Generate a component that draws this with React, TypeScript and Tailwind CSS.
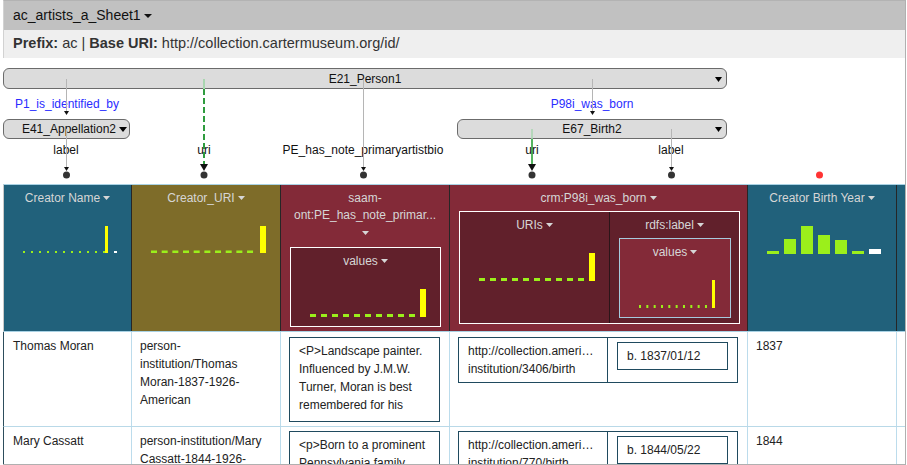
import React from 'react';

type Bar = { x: number; y: number; w: number; h: number; c: string };

const GREEN = '#9bef1b';
const YELLOW = '#ffff00';

const Caret = ({ w = 7, h = 4 }: { w?: number; h?: number }) => (
  <svg width={w} height={h} viewBox={`0 0 ${w} ${h}`} className="shrink-0">
    <path d={`M0 0H${w}L${w / 2} ${h}Z`} fill="currentColor" />
  </svg>
);

const Title = ({ children }: { children: React.ReactNode }) => (
  <div className="flex items-center gap-[3px] leading-[16px] text-[#d6d6d6] whitespace-nowrap">
    {children}
    <Caret />
  </div>
);

const Chart = ({ width, height, bars }: { width: number; height: number; bars: Bar[] }) => (
  <svg width={width} height={height} className="block shrink-0">
    {bars.map((b, i) => (
      <rect key={i} x={b.x} y={b.y} width={b.w} height={b.h} fill={b.c} />
    ))}
  </svg>
);

const run = (n: number, x0: number, step: number, w: number, y: number, h: number): Bar[] =>
  Array.from({ length: n }, (_, i) => ({ x: x0 + step * i, y, w, h, c: GREEN }));

const nameBars = [...run(11, 19, 8, 2, 31, 2), { x: 101, y: 6, w: 3, h: 27, c: YELLOW }, { x: 110, y: 31, w: 3, h: 2, c: '#fff' }];
const uriBars = [...run(10, 19, 10.67, 6, 30.5, 2.5), { x: 128, y: 6, w: 6, h: 27, c: YELLOW }];
const wideBars = [...run(10, 19, 11, 6, 45, 3), { x: 129, y: 20, w: 6, h: 28, c: YELLOW }];
const labelBars = [...run(10, 19, 7.33, 2, 45, 3), { x: 92, y: 20, w: 3, h: 28, c: YELLOW }];
const yearBars: Bar[] = [
  { x: 19, y: 31, w: 12, h: 3, c: GREEN },
  { x: 36, y: 19, w: 12, h: 15, c: GREEN },
  { x: 53, y: 6, w: 12, h: 28, c: GREEN },
  { x: 70, y: 15, w: 12, h: 19, c: GREEN },
  { x: 87, y: 20, w: 12, h: 14, c: GREEN },
  { x: 104, y: 31, w: 12, h: 3, c: GREEN },
  { x: 121, y: 29, w: 12, h: 5, c: '#fff' },
];

// graph: node labels centred on their link lines (page x)
const links = [
  { x: 66, text: 'label' },
  { x: 204, text: 'uri' },
  { x: 363, text: 'PE_has_note_primaryartistbio' },
  { x: 532, text: 'uri' },
  { x: 671, text: 'label' },
];

const SmallArrow = ({ x, tip }: { x: number; tip: number }) => (
  <path d={`M${x - 2.5} ${tip - 4}H${x + 2.5}L${x} ${tip}Z`} fill="#111" />
);
const BigArrow = ({ x, tip }: { x: number; tip: number }) => (
  <path d={`M${x - 4} ${tip - 7}H${x + 4}L${x} ${tip}Z`} fill="#111" />
);

const Graph = () => (
  <div className="relative h-[126px] shrink-0 text-[12px] text-[#111]">
    {/* E21_Person1 */}
    <div className="absolute left-0 top-[10px] w-[724px] h-[21px] rounded-[6px] border border-[#6b6b6b] bg-[#dcdcdc] flex items-center justify-center">
      E21_Person1
      <span className="absolute right-[4px] top-[8px] text-black"><Caret w={7} h={5} /></span>
    </div>
    {/* E41_Appellation2 */}
    <div className="absolute left-0 top-[61px] w-[127px] h-[20px] rounded-[6px] border border-[#6b6b6b] bg-[#dcdcdc] flex items-center justify-end gap-[3px] pr-[2px]">
      E41_Appellation2
      <span className="text-black"><Caret w={8} h={5} /></span>
    </div>
    {/* E67_Birth2 */}
    <div className="absolute left-[454px] top-[61px] w-[270px] h-[20px] rounded-[6px] border border-[#6b6b6b] bg-[#dcdcdc] flex items-center justify-center">
      E67_Birth2
      <span className="absolute right-[4px] top-[7px] text-black"><Caret w={7} h={5} /></span>
    </div>

    <div className="absolute left-[-36px] top-[38px] w-[200px] leading-[16px] text-center text-[#2a2cff]">P1_is_identified_by</div>
    <div className="absolute left-[489px] top-[38px] w-[200px] leading-[16px] text-center text-[#2a2cff]">P98i_was_born</div>

    {links.map((l, i) => (
      <div key={i} className="absolute top-[84px] w-[200px] leading-[16px] text-center" style={{ left: l.x - 3 - 100 }}>
        {l.text}
      </div>
    ))}

    <svg width="902" height="126" className="absolute left-0 top-0 pointer-events-none">
      <g transform="translate(-3 -58)">
        <path d="M66.5 79V112M66.5 129V168M363.5 79V168M592.5 79V112M671.5 129V168" stroke="#b5b5b5" strokeWidth="1" fill="none" />
        <path d="M204 79V89" stroke="#a9d6b0" strokeWidth="2" />
        <path d="M204 89V164" stroke="#2f9c3f" strokeWidth="2" strokeDasharray="6 3" />
        <path d="M532 129V139" stroke="#a9d6b0" strokeWidth="1.5" />
        <path d="M532 139V164" stroke="#1c9b2c" strokeWidth="1.5" />
        <SmallArrow x={66.5} tip={115} />
        <SmallArrow x={592.5} tip={115} />
        <SmallArrow x={66.5} tip={171} />
        <SmallArrow x={363.5} tip={171} />
        <SmallArrow x={671.5} tip={171} />
        <BigArrow x={204} tip={171} />
        <BigArrow x={532} tip={171} />
        {[66.5, 204, 363.5, 532, 671.5].map((x) => (
          <circle key={x} cx={x} cy={175} r={3.5} fill="#333" />
        ))}
        <circle cx={819.5} cy={175} r={3.5} fill="#ff3434" />
      </g>
    </svg>
  </div>
);

const HeaderRow = () => (
  <div className="flex h-[148px] shrink-0 border-t border-b border-[#a9d2e4] border-l border-l-[#c9c9c9] text-[12px]">
    <div className="w-[128px] shrink-0 bg-[#21617b] border-r border-[#262626] flex flex-col items-center">
      <div className="mt-[5px]"><Title>Creator Name</Title></div>
      <div className="mt-[14px]"><Chart width={127} height={40} bars={nameBars} /></div>
    </div>

    <div className="w-[149px] shrink-0 bg-[#7e6c29] border-r border-[#262626] flex flex-col items-center">
      <div className="mt-[5px]"><Title>Creator_URI</Title></div>
      <div className="mt-[14px]"><Chart width={148} height={40} bars={uriBars} /></div>
    </div>

    <div className="w-[169px] shrink-0 bg-[#832a38] border-r border-[#262626] flex flex-col">
      <div className="mt-[5px] leading-[17px] text-center text-[#d6d6d6] whitespace-nowrap">
        <div>saam-</div>
        <div>ont:PE_has_note_primar...</div>
        <div className="h-[17px] flex items-center justify-center"><Caret /></div>
      </div>
      <div className="ml-[9px] mt-[6px] w-[151px] h-[80px] border border-white bg-[#61202b] flex flex-col items-center">
        <div className="mt-[5px]"><Title>values</Title></div>
        <Chart width={149} height={50} bars={wideBars} />
      </div>
    </div>

    <div className="w-[298px] shrink-0 bg-[#832a38] border-r border-[#262626] flex flex-col">
      <div className="mt-[5px] flex justify-center"><Title>crm:P98i_was_born</Title></div>
      <div className="ml-[9px] mt-[5px] w-[281px] h-[113px] border border-white bg-[#61202b] flex">
        <div className="w-[150px] shrink-0 border-r border-[#2b1418] flex flex-col items-center">
          <div className="mt-[5px]"><Title>URIs</Title></div>
          <Chart width={149} height={50} bars={wideBars} />
        </div>
        <div className="flex-1 flex flex-col">
          <div className="mt-[5px] flex justify-center"><Title>rdfs:label</Title></div>
          <div className="ml-[9px] mt-[5px] w-[112px] h-[80px] border border-[#a6cadd] bg-[#832a38] flex flex-col items-center">
            <div className="mt-[5px]"><Title>values</Title></div>
            <Chart width={110} height={50} bars={labelBars} />
          </div>
        </div>
      </div>
    </div>

    <div className="w-[149px] shrink-0 bg-[#21617b] border-r border-[#262626] flex flex-col items-center">
      <div className="mt-[5px]"><Title>Creator Birth Year</Title></div>
      <div className="mt-[14px]"><Chart width={148} height={40} bars={yearBars} /></div>
    </div>

    <div className="flex-1 bg-[#21617b]" />
  </div>
);

type Row = {
  name: string;
  uri: string[];
  bio: string[];
  birthUri: string[];
  birth: string;
  year: string;
};

const rows: Row[] = [
  {
    name: 'Thomas Moran',
    uri: ['person-', 'institution/Thomas', 'Moran-1837-1926-', 'American'],
    bio: ['<P>Landscape painter.', 'Influenced by J.M.W.', 'Turner, Moran is best', 'remembered for his'],
    birthUri: ['http://collection.ameri…', 'institution/3406/birth'],
    birth: 'b. 1837/01/12',
    year: '1837',
  },
  {
    name: 'Mary Cassatt',
    uri: ['person-institution/Mary', 'Cassatt-1844-1926-'],
    bio: ['<p>Born to a prominent', 'Pennsylvania family'],
    birthUri: ['http://collection.ameri…', 'institution/770/birth'],
    birth: 'b. 1844/05/22',
    year: '1844',
  },
];

const DataRow = ({ row, first }: { row: Row; first: boolean }) => (
  <div className="flex h-[95px] shrink-0 border-b border-[#b9d9e8] border-l border-l-[#2d4d5c] text-[12px] leading-[18px] text-[#222]">
    <div className="w-[128px] shrink-0 border-r border-[#bcdcec] pl-[9px] pt-[5px] whitespace-nowrap">{row.name}</div>
    <div className="w-[149px] shrink-0 border-r border-[#bcdcec] pl-[8px] pt-[5px] whitespace-nowrap">
      {row.uri.map((t) => <div key={t}>{t}</div>)}
    </div>
    <div className={`w-[169px] shrink-0 border-r border-[#bcdcec] pl-[8px] ${first ? 'pt-[5px]' : 'pt-[4px]'}`}>
      <div className="w-[151px] h-[85px] border border-[#1f4a5e] pl-[9px] pt-[4px] overflow-hidden whitespace-nowrap">
        {row.bio.map((t) => <div key={t}>{t}</div>)}
      </div>
    </div>
    <div className={`w-[298px] shrink-0 border-r border-[#bcdcec] pl-[8px] ${first ? 'pt-[5px]' : 'pt-[4px]'}`}>
      <div className="w-[280px] h-[46px] border border-[#1f4a5e] flex">
        <div className="w-[149px] shrink-0 border-r border-[#1f4a5e] pl-[9px] pt-[4px] whitespace-nowrap">
          {row.birthUri.map((t) => <div key={t}>{t}</div>)}
        </div>
        <div className="flex-1 pl-[9px] pt-[4px]">
          <div className="w-[111px] h-[28px] border border-[#1f4a5e] flex items-center pl-[9px] whitespace-nowrap">{row.birth}</div>
        </div>
      </div>
    </div>
    <div className="w-[149px] shrink-0 border-r border-[#bcdcec] pl-[8px] pt-[5px]">{row.year}</div>
    <div className="flex-1" />
  </div>
);

export default function App() {
  return (
    <div className="w-[907px] h-[465px] overflow-hidden bg-white font-['Liberation_Sans',Arial,Helvetica,sans-serif]">
      <div className="ml-[3px] w-[903px] h-[465px] border-r border-b border-[#b0b0b0] flex flex-col overflow-hidden">
        <div className="h-[30px] shrink-0 bg-[#c1c1c1] border-t border-t-[#b3b3b3] border-l border-l-[#d2d2d2] flex items-center gap-[3px] pl-[9px] text-[14px] text-[#111]">
          ac_artists_a_Sheet1
          <Caret w={8} h={4} />
        </div>
        <div className="h-[28px] shrink-0 bg-[#efefef] border-l border-[#d2d2d2] flex items-center pl-[9px] text-[14.5px] text-[#333] whitespace-nowrap">
          <b>Prefix:</b>&nbsp;ac |&nbsp;<b>Base URI:</b>&nbsp;http://collection.cartermuseum.org/id/
        </div>
        <Graph />
        <div className="flex-1 overflow-hidden flex flex-col">
          <HeaderRow />
          {rows.map((r, i) => (
            <DataRow key={r.name} row={r} first={i === 0} />
          ))}
        </div>
      </div>
    </div>
  );
}
